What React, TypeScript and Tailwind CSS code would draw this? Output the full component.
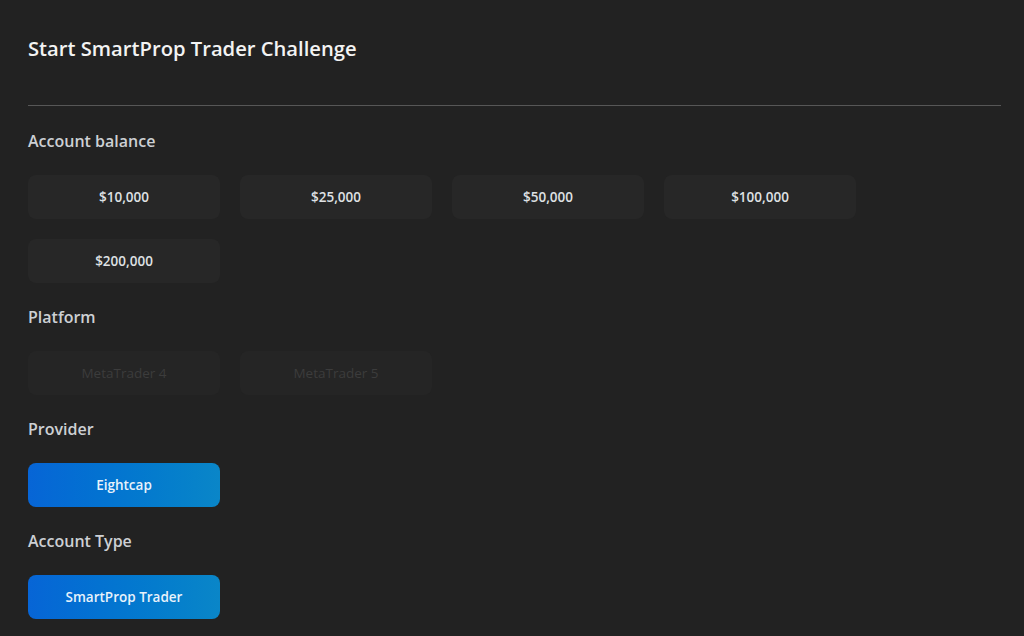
const balances = ["$10,000", "$25,000", "$50,000", "$100,000", "$200,000"];
const platforms = ["MetaTrader 4", "MetaTrader 5"];

function Option({
  label,
  variant = "default",
}: {
  label: string;
  variant?: "default" | "disabled" | "active";
}) {
  const styles = {
    default: "bg-[#272727] text-[#dfe1e4] font-semibold",
    disabled: "bg-[#252525] text-[#3c3c3c] font-normal",
    active:
      "bg-gradient-to-r from-[#0765d6] to-[#0a86c8] text-[#e8f2fb] font-semibold",
  };
  return (
    <button
      type="button"
      className={`h-11 w-[192px] rounded-lg text-[13.5px] flex items-center justify-center ${styles[variant]}`}
    >
      {label}
    </button>
  );
}

function Section({ title, children }: { title: string; children: React.ReactNode }) {
  return (
    <section className="flex flex-col">
      <h3 className="text-[16px] leading-6 font-semibold text-[#cdd0d4]">{title}</h3>
      <div className="mt-[22px] flex flex-wrap gap-x-5 gap-y-5 w-[860px]">
        {children}
      </div>
    </section>
  );
}

export default function App() {
  return (
    <div
      className="min-h-[636px] w-full bg-[#222222] pl-7 pr-[23px] pt-[34px]"
      style={{ fontFamily: '"Open Sans", "Noto Sans", sans-serif' }}
    >
      <h1 className="text-[20.2px] leading-7 font-semibold text-[#f3f3f3]">
        Start SmartProp Trader Challenge
      </h1>
      <div className="mt-[43px] h-px bg-[#575757]" />

      <div className="mt-[23px] flex flex-col gap-[22px]">
        <Section title="Account balance">
          {balances.map(b => (
            <Option key={b} label={b} />
          ))}
        </Section>

        <Section title="Platform">
          {platforms.map(p => (
            <Option key={p} label={p} variant="disabled" />
          ))}
        </Section>

        <Section title="Provider">
          <Option label="Eightcap" variant="active" />
        </Section>

        <Section title="Account Type">
          <Option label="SmartProp Trader" variant="active" />
        </Section>
      </div>
    </div>
  );
}
